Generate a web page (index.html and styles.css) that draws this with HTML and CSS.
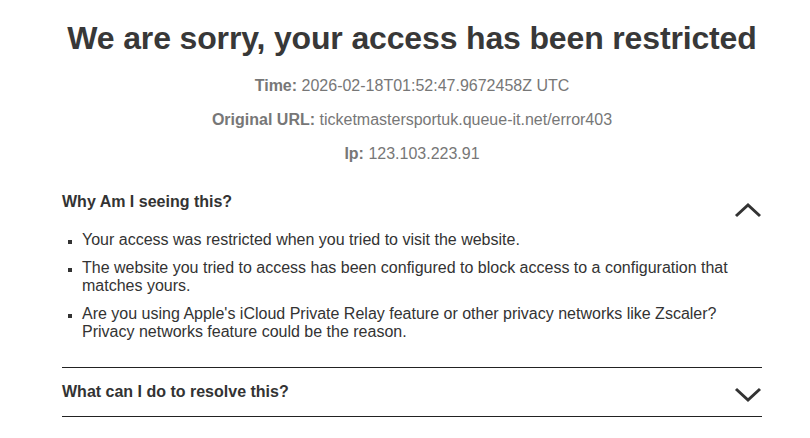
FILE: index.html
```html
<!DOCTYPE html>
<html>
<head>
<meta charset="utf-8">
<link rel="stylesheet" href="styles.css">
</head>
<body>
<div class="page">
  <h1 class="title">We are sorry, your access has been restricted</h1>
  <div class="meta">
    <p><b>Time:</b> 2026-02-18T01:52:47.9672458Z UTC</p>
    <p><b>Original URL:</b> ticketmastersportuk.queue-it.net/error403</p>
    <p><b>Ip:</b> 123.103.223.91</p>
  </div>
  <section class="acc acc-open">
    <div class="acc-head">
      <span>Why Am I seeing this?</span>
      <svg class="chev" width="28" height="16" viewBox="0 0 28 16"><path d="M2 14 L14 3 L26 14" fill="none" stroke="#333" stroke-width="3"/></svg>
    </div>
    <ul class="acc-list">
      <li>Your access was restricted when you tried to visit the website.</li>
      <li>The website you tried to access has been configured to block access to a configuration that matches yours.</li>
      <li>Are you using Apple's iCloud Private Relay feature or other privacy networks like Zscaler? Privacy networks feature could be the reason.</li>
    </ul>
  </section>
  <section class="acc acc-closed">
    <div class="acc-head">
      <span>What can I do to resolve this?</span>
      <svg class="chev" width="28" height="16" viewBox="0 0 28 16"><path d="M2 2 L14 13 L26 2" fill="none" stroke="#333" stroke-width="3"/></svg>
    </div>
  </section>
</div>
</body>
</html>
```
FILE: styles.css
```css
html, body { margin: 0; padding: 0; background: #fff; }
body { font-family: "Liberation Sans", Arial, Helvetica, sans-serif; color: #333; }
.page { width: 700px; margin-left: 62px; padding-top: 20px; }
.title { margin: 0; font-size: 32px; font-weight: bold; text-align: center; color: #383838; line-height: 36px; letter-spacing: -0.15px; }
.meta { margin-top: 13px; text-align: center; color: #777; font-size: 16px; }
.meta p { margin: 0; line-height: 34px; }
.meta b { font-weight: bold; }
.acc-head { display: flex; justify-content: space-between; font-size: 16px; font-weight: bold; color: #333; }
.acc-head span { line-height: 20px; }
.acc-open .acc-head { margin-top: 21px; align-items: flex-start; }
.acc-open .chev { margin-top: 10px; }
.acc-list { list-style: square; margin: 13px 0 0; padding-left: 20px; font-size: 16px; color: #333; }
.acc-list li { line-height: 18px; margin-bottom: 10px; }
.acc-list li::marker { font-size: 12px; }
.acc-open { padding-bottom: 16px; border-bottom: 1px solid #222; }
.acc-closed { border-bottom: 1px solid #222; }
.acc-closed .acc-head { height: 48px; align-items: center; }
.acc-closed .chev { margin-top: 6px; }
```
